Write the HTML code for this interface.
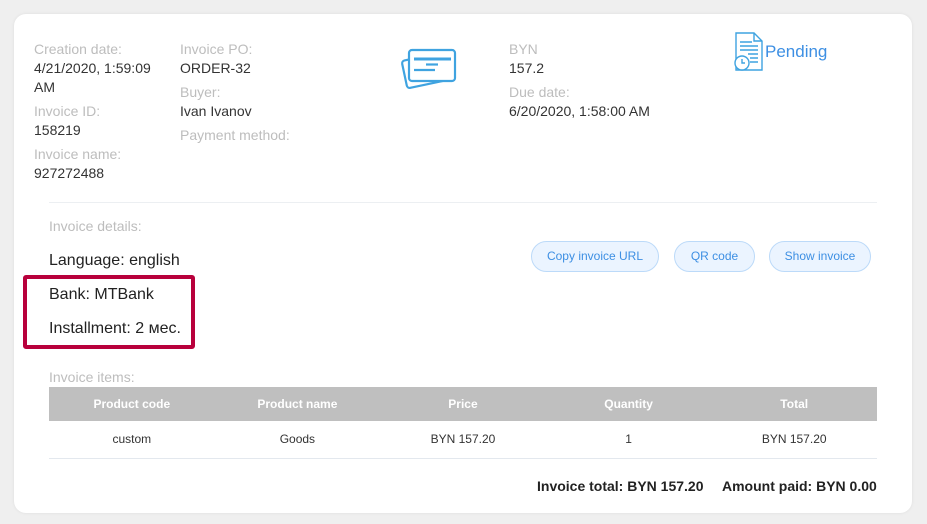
<!DOCTYPE html>
<html><head><meta charset="utf-8"><style>
*{margin:0;padding:0;box-sizing:border-box}
body{width:927px;height:524px;background:#efefef;font-family:"Liberation Sans","Noto Sans CJK SC",sans-serif;position:relative;overflow:hidden}
.card{position:absolute;left:14px;top:14px;width:898px;height:499px;background:#fff;border-radius:12px;box-shadow:0 0 3px rgba(0,0,0,.08)}
.a{position:absolute;font-size:14px;line-height:19px;white-space:nowrap}
.l{color:#bdbdbd}.v{color:#333}
.btn{position:absolute;top:241px;height:31px;border:1px solid #bcdaf9;background:#ebf4ff;border-radius:16px;color:#3d8fe3;font-size:12px;line-height:29px;text-align:center}
table{position:absolute;left:49px;top:387px;width:828px;border-collapse:collapse;font-size:12px;table-layout:fixed}
th{background:#bfbfbf;color:#fff;height:34px;font-weight:bold}
td{height:37px;text-align:center;color:#333;border-bottom:1px solid #e3e8ee}
</style></head><body>
<div class="card"></div>
<div class="a l" style="left:34px;top:40px">Creation date:</div>
<div class="a v" style="left:34px;top:59px">4/21/2020, 1:59:09<br>AM</div>
<div class="a l" style="left:34px;top:102px">Invoice ID:</div>
<div class="a v" style="left:34px;top:121px">158219</div>
<div class="a l" style="left:34px;top:145px">Invoice name:</div>
<div class="a v" style="left:34px;top:164px">927272488</div>
<div class="a l" style="left:180px;top:40px">Invoice PO:</div>
<div class="a v" style="left:180px;top:59px">ORDER-32</div>
<div class="a l" style="left:180px;top:83px">Buyer:</div>
<div class="a v" style="left:180px;top:102px">Ivan Ivanov</div>
<div class="a l" style="left:180px;top:126px">Payment method:</div>
<svg style="position:absolute;left:400px;top:44px" width="60" height="48" viewBox="0 0 60 48" fill="none" stroke="#3fa3e0" stroke-width="2.2">
<rect x="4" y="12" width="46" height="28" rx="3" transform="rotate(-12 27 26)"/>
<rect x="9" y="6" width="46" height="31" rx="3" fill="#fff"/>
<line x1="14" y1="15" x2="51" y2="15" stroke-width="3"/>
<line x1="26" y1="20.5" x2="38" y2="20.5"/>
<line x1="14" y1="26" x2="35" y2="26"/>
</svg>
<div class="a l" style="left:509px;top:40px">BYN</div>
<div class="a v" style="left:509px;top:59px">157.2</div>
<div class="a l" style="left:509px;top:83px">Due date:</div>
<div class="a v" style="left:509px;top:102px">6/20/2020, 1:58:00 AM</div>
<svg style="position:absolute;left:733px;top:32px" width="32" height="40" viewBox="0 0 32 40" fill="none" stroke="#3fa3e0" stroke-width="1.4">
<path d="M3 1h18l8 8v29H3z"/><path d="M21 1v8h8"/>
<path d="M7 10h12M7 14h18M7 18h18M15 22h10M17 26h8M17 30h8"/>
<circle cx="9" cy="31" r="7" fill="#fff"/><path d="M9 27v4h3"/>
</svg>
<div class="a" style="left:765px;top:42px;font-size:17px;color:#3d8fe3">Pending</div>
<div style="position:absolute;left:49px;top:202px;width:828px;border-top:1px solid #eceff2"></div>
<div class="a l" style="left:49px;top:217px">Invoice details:</div>
<div class="a" style="left:49px;top:251px;font-size:16px;color:#222">Language: english</div>
<div class="a" style="left:49px;top:285px;font-size:16px;color:#222">Bank: MTBank</div>
<div class="a" style="left:49px;top:319px;font-size:16px;color:#222">Installment: 2 мес.</div>
<div style="position:absolute;left:23px;top:275px;width:172px;height:74px;border:4.5px solid #b8003c;border-radius:3px"></div>
<div class="btn" style="left:531px;width:128px">Copy invoice URL</div>
<div class="btn" style="left:674px;width:81px">QR code</div>
<div class="btn" style="left:769px;width:102px">Show invoice</div>
<div class="a l" style="left:49px;top:368px">Invoice items:</div>
<table><tr><th>Product code</th><th>Product name</th><th>Price</th><th>Quantity</th><th>Total</th></tr>
<tr><td>custom</td><td>Goods</td><td>BYN 157.20</td><td>1</td><td>BYN 157.20</td></tr></table>
<div class="a" style="left:537px;top:477px;font-size:14px;font-weight:bold;color:#222">Invoice total: BYN 157.20</div>
<div class="a" style="left:722px;top:477px;font-size:14px;font-weight:bold;color:#222">Amount paid: BYN 0.00</div>
</body></html>
